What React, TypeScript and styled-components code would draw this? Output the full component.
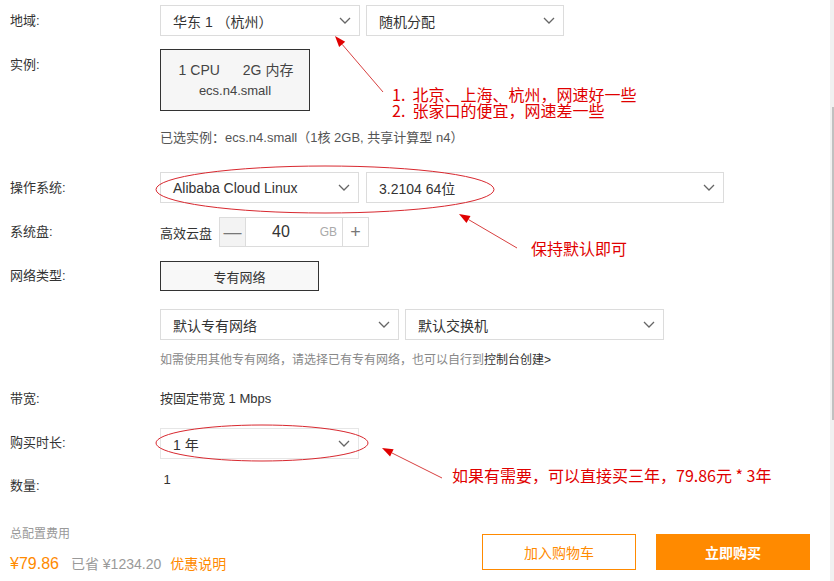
import React from "react";
import styled, { createGlobalStyle } from "styled-components";

const GlobalStyle = createGlobalStyle`
  html, body {
    margin: 0;
    padding: 0;
    background: #fff;
  }
  body {
    font-family: "Liberation Sans", "Noto Sans CJK SC", sans-serif;
    color: #333;
    overflow: hidden;
  }
`;

const Page = styled.div`
  position: relative;
  width: 834px;
  height: 581px;
  padding: 5px 24px 0 10px;
  box-sizing: border-box;
`;

const Row = styled.div<{ $mt?: number }>`
  display: grid;
  grid-template-columns: 150px 1fr;
  margin-top: ${(p) => p.$mt ?? 0}px;
`;

const Label = styled.div<{ $lh?: number; $pt?: number }>`
  font-size: 13px;
  color: #333;
  line-height: ${(p) => p.$lh ?? 31}px;
  padding-top: ${(p) => p.$pt ?? 0}px;
`;

const Controls = styled.div<{ $gap?: number }>`
  display: flex;
  align-items: center;
  gap: ${(p) => p.$gap ?? 6}px;
`;

const SelectBox = styled.div<{ $w: number; $light?: boolean }>`
  width: ${(p) => p.$w}px;
  height: 31px;
  box-sizing: border-box;
  border: 1px solid ${(p) => (p.$light ? "#e6e6e6" : "#dcdcdc")};
  background: #fff;
  display: flex;
  align-items: center;
  justify-content: space-between;
  padding: 0 8px 0 12px;
  font-size: 14px;
  color: #333;
`;

const Chevron = () => (
  <svg width="12" height="7" viewBox="0 0 12 7">
    <path d="M1 1 L6 6 L11 1" fill="none" stroke="#666" strokeWidth="1.3" />
  </svg>
);

const Select: React.FC<{ w: number; light?: boolean; children: React.ReactNode }> = ({
  w,
  light,
  children,
}) => (
  <SelectBox $w={w} $light={light}>
    <span>{children}</span>
    <Chevron />
  </SelectBox>
);

const InstanceCard = styled.div`
  width: 150px;
  height: 62px;
  box-sizing: border-box;
  border: 1px solid #333;
  background: #f6f6f6;
  display: flex;
  flex-direction: column;
  align-items: center;
  justify-content: center;
  gap: 4px;
`;

const SpecLine = styled.div`
  font-size: 14px;
  color: #444;
  display: flex;
  gap: 23px;
  line-height: 18px;
  padding-left: 2px;
`;

const SpecName = styled.div`
  font-size: 13px;
  color: #444;
  line-height: 16px;
`;

const Info = styled.div<{ $size?: number; $color?: string; $lh?: number }>`
  font-size: ${(p) => p.$size ?? 13}px;
  color: ${(p) => p.$color ?? "#555"};
  line-height: ${(p) => p.$lh ?? 20}px;
  white-space: nowrap;
`;

const DarkLink = styled.span`
  color: #333;
`;

const DiskType = styled.span`
  font-size: 13px;
  color: #333;
  margin-right: 2px;
`;

const Stepper = styled.div`
  display: flex;
  height: 30px;
  border: 1px solid #dcdcdc;
  box-sizing: border-box;
`;

const StepBtn = styled.div<{ $grey?: boolean }>`
  width: 25px;
  display: flex;
  align-items: center;
  justify-content: center;
  background: ${(p) => (p.$grey ? "#f3f3f3" : "#fff")};
  color: #777;
  font-size: 18px;
  font-weight: 300;
`;

const StepInput = styled.div`
  width: 98px;
  border-left: 1px solid #dcdcdc;
  border-right: 1px solid #dcdcdc;
  display: flex;
  align-items: center;
  position: relative;
  font-size: 16px;
  color: #333;
  padding-left: 26px;
  box-sizing: border-box;
`;

const Unit = styled.span`
  position: absolute;
  right: 5px;
  font-size: 12px;
  color: #aaa;
`;

const ToggleBtn = styled.div`
  width: 159px;
  height: 30px;
  box-sizing: border-box;
  border: 1px solid #333;
  background: #f8f8f8;
  display: flex;
  align-items: center;
  justify-content: center;
  font-size: 13px;
  color: #333;
`;

const Footer = styled.div`
  display: flex;
  justify-content: space-between;
  align-items: flex-start;
  margin-top: 29px;
`;

const Summary = styled.div`
  display: flex;
  flex-direction: column;
  gap: 10px;
`;

const PriceLine = styled.div`
  display: flex;
  align-items: baseline;
  gap: 12px;
  line-height: 22px;
`;

const Price = styled.span`
  font-size: 16px;
  color: #ff8a00;
`;

const Saved = styled.span`
  font-size: 14px;
  color: #999;
  margin-right: -3px;
`;

const Promo = styled.span`
  font-size: 14px;
  color: #ff8a00;
`;

const Buttons = styled.div`
  display: flex;
  gap: 20px;
  padding-top: 9px;
`;

const Button = styled.div<{ $primary?: boolean }>`
  width: 154px;
  height: 36px;
  box-sizing: border-box;
  display: flex;
  align-items: center;
  justify-content: center;
  font-size: 14px;
  border: 1px solid #ff8a00;
  background: ${(p) => (p.$primary ? "#ff8a00" : "#fff")};
  color: ${(p) => (p.$primary ? "#fff" : "#ff8a00")};
  font-weight: ${(p) => (p.$primary ? 700 : 400)};
`;

const Overlay = styled.svg`
  position: absolute;
  left: 0;
  top: 0;
  pointer-events: none;
`;

const Note = styled.div<{ $x: number; $y: number }>`
  position: absolute;
  left: ${(p) => p.$x}px;
  top: ${(p) => p.$y}px;
  font-family: "Noto Sans CJK SC", sans-serif;
  font-size: 16px;
  line-height: 16px;
  color: #e00000;
  white-space: pre;
`;

const ScrollTrack = styled.div`
  position: absolute;
  right: 0;
  top: 0;
  width: 4px;
  height: 581px;
  background: #f1f1f1;
`;

const ScrollThumb = styled.div`
  position: absolute;
  right: 0;
  top: 107px;
  width: 2px;
  height: 313px;
  background: #c1c1c1;
`;

const Arrow: React.FC<{ x1: number; y1: number; x2: number; y2: number }> = ({
  x1,
  y1,
  x2,
  y2,
}) => {
  const a = Math.atan2(y2 - y1, x2 - x1);
  const len = 11;
  const w = 4;
  const bx = x2 - len * Math.cos(a);
  const by = y2 - len * Math.sin(a);
  const px = -Math.sin(a) * w;
  const py = Math.cos(a) * w;
  return (
    <g>
      <line x1={x1} y1={y1} x2={bx} y2={by} stroke="#d84040" strokeWidth="1" />
      <polygon
        points={`${x2},${y2} ${bx + px},${by + py} ${bx - px},${by - py}`}
        fill="#e00000"
      />
    </g>
  );
};

export default function App() {
  return (
    <Page>
      <GlobalStyle />

      <Row>
        <Label>地域:</Label>
        <Controls>
          <Select w={200}>华东 1 （杭州）</Select>
          <Select w={198}>随机分配</Select>
        </Controls>
      </Row>

      <Row $mt={13}>
        <Label $lh={31}>实例:</Label>
        <Controls>
          <InstanceCard>
            <SpecLine>
              <span>1 CPU</span>
              <span>2G 内存</span>
            </SpecLine>
            <SpecName>ecs.n4.small</SpecName>
          </InstanceCard>
        </Controls>
      </Row>

      <Row $mt={17}>
        <div />
        <Info>已选实例：ecs.n4.small（1核 2GB, 共享计算型 n4）</Info>
      </Row>

      <Row $mt={24}>
        <Label>操作系统:</Label>
        <Controls $gap={7}>
          <Select w={199}>Alibaba Cloud Linux</Select>
          <Select w={358}>3.2104 64位</Select>
        </Controls>
      </Row>

      <Row $mt={14}>
        <Label $lh={30}>系统盘:</Label>
        <Controls $gap={5}>
          <DiskType>高效云盘</DiskType>
          <Stepper>
            <StepBtn $grey>—</StepBtn>
            <StepInput>
              40
              <Unit>GB</Unit>
            </StepInput>
            <StepBtn>+</StepBtn>
          </Stepper>
        </Controls>
      </Row>

      <Row $mt={14}>
        <Label $lh={30}>网络类型:</Label>
        <Controls>
          <ToggleBtn>专有网络</ToggleBtn>
        </Controls>
      </Row>

      <Row $mt={18}>
        <div />
        <Controls>
          <Select w={239}>默认专有网络</Select>
          <Select w={259}>默认交换机</Select>
        </Controls>
      </Row>

      <Row $mt={11}>
        <div />
        <Info $size={12} $color="#888" $lh={18}>
          如需使用其他专有网络，请选择已有专有网络，也可以自行到
          <DarkLink>控制台创建&gt;</DarkLink>
        </Info>
      </Row>

      <Row $mt={20}>
        <Label $lh={20}>带宽:</Label>
        <Info $color="#333">按固定带宽 1 Mbps</Info>
      </Row>

      <Row $mt={19}>
        <Label $lh={30}>购买时长:</Label>
        <Controls>
          <Select w={199} light>
            1 年
          </Select>
        </Controls>
      </Row>

      <Row $mt={11}>
        <Label $lh={20} $pt={6}>
          数量:
        </Label>
        <Info $color="#333">&nbsp;1</Info>
      </Row>

      <Footer>
        <Summary>
          <Info $size={12} $color="#999" $lh={18}>
            总配置费用
          </Info>
          <PriceLine>
            <Price>¥79.86</Price>
            <Saved>已省 ¥1234.20</Saved>
            <Promo>优惠说明</Promo>
          </PriceLine>
        </Summary>
        <Buttons>
          <Button>加入购物车</Button>
          <Button $primary>立即购买</Button>
        </Buttons>
      </Footer>

      <Overlay width="834" height="581">
        <ellipse cx="325" cy="189.5" rx="169" ry="23.5" fill="none" stroke="#d8282f" strokeWidth="1" />
        <ellipse cx="262" cy="443" rx="106" ry="18" fill="none" stroke="#d8282f" strokeWidth="1" />
        <Arrow x1={383} y1={92} x2={335} y2={36} />
        <Arrow x1={517} y1={248} x2={459} y2={214} />
        <Arrow x1={442} y1={478} x2={382} y2={448} />
      </Overlay>

      <Note $x={392} $y={86}>{"1.  北京、上海、杭州，网速好一些\n2.  张家口的便宜，网速差一些"}</Note>
      <Note $x={531} $y={240}>保持默认即可</Note>
      <Note $x={452} $y={467}>如果有需要，可以直接买三年，79.86元 * 3年</Note>

      <ScrollTrack>
        <ScrollThumb />
      </ScrollTrack>
    </Page>
  );
}
